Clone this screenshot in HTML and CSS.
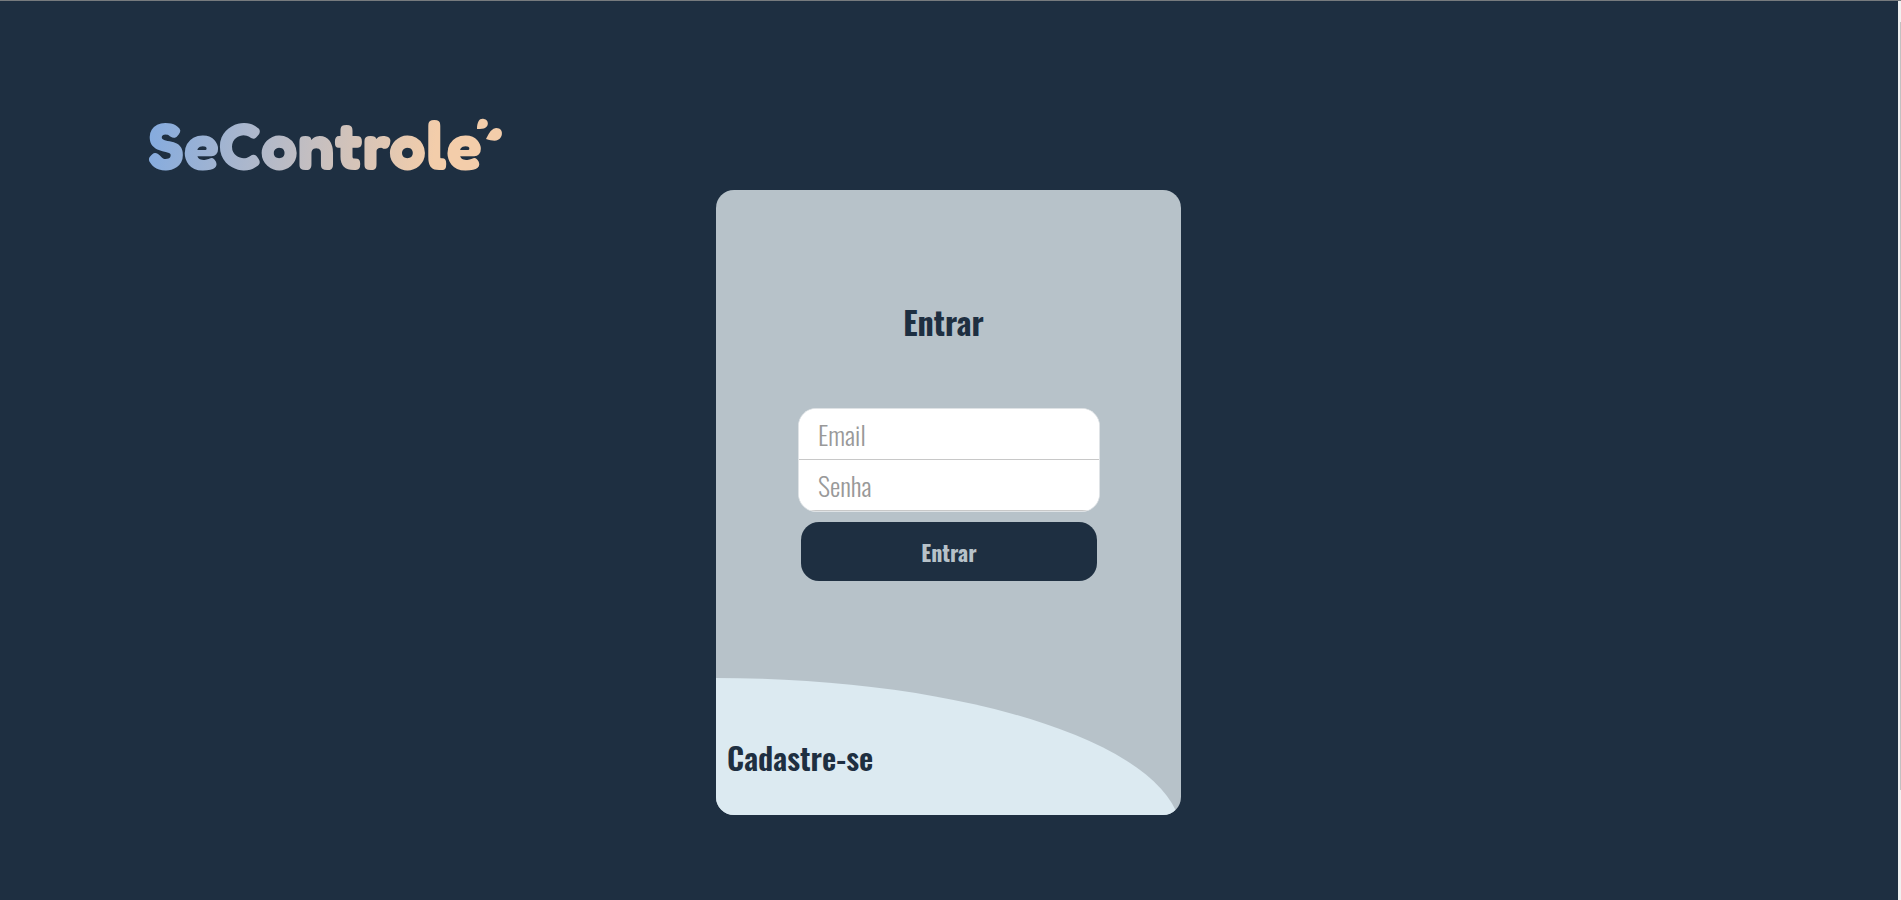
FILE: index.html
```html
<!DOCTYPE html>
<html lang="pt-BR">
<head>
<meta charset="utf-8">
<title>SeControle</title>
<link rel="stylesheet" href="styles.css">
</head>
<body>
<div class="page">
  <header class="header">
    <svg class="logo" width="364" height="90" viewBox="-4 -18 364 90" role="img" aria-label="SeControle">
      <defs>
        <linearGradient id="brand" gradientUnits="userSpaceOnUse" x1="0" y1="20" x2="285" y2="60">
          <stop offset="0" stop-color="#84abdf"/>
          <stop offset="1" stop-color="#f3cdaa"/>
        </linearGradient>
      </defs>
      <text class="logo-text" x="2" y="51" fill="url(#brand)">SeControle</text>
      <path fill="#f3cdaa" d="M331 11C331 3 334 0 338 1C343 2 343 8 339 10Q337 11 331 11Z"/>
      <path fill="#f3cdaa" d="M340 21Q345 10 350 10C356 10 357 15 355 19C352 24 347 23 340 21Z"/>
    </svg>
  </header>
  <main class="main">
    <section class="card">
      <form class="login">
        <h1 class="title">Entrar</h1>
        <div class="fields">
          <input class="field" type="email" placeholder="Email" aria-label="Email">
          <input class="field" type="password" placeholder="Senha" aria-label="Senha">
        </div>
        <button class="submit" type="button">Entrar</button>
      </form>
      <div class="signup">
        <a class="signup-link" href="#">Cadastre-se</a>
      </div>
    </section>
  </main>
</div>
<div class="rail"><div class="rail-thumb"></div></div>
</body>
</html>
```

FILE: styles.css
```css
* {
  box-sizing: border-box;
}

body {
  margin: 0;
  min-height: 100vh;
  display: flex;
  border-top: 1px solid #777b7e;
  background: #1e2f41;
  color: #1e2f41;
  font-family: Oswald, "Liberation Sans Narrow", "Liberation Sans", sans-serif;
}

.page {
  flex: 1;
}

.rail {
  display: flex;
  justify-content: flex-end;
  width: 3px;
  padding: 21px 0 110px;
  background: #f1f1f1;
}

.rail-thumb {
  width: 1px;
  background: #c1c1c1;
}

.header {
  padding: 99px 142px 0;
}

.logo {
  display: block;
  overflow: visible;
}

.logo-text {
  font-family: "Fredoka One", Fredoka, "Baloo 2", Nunito, Lato, sans-serif;
  font-size: 66px;
  font-weight: 700;
}

.main {
  padding: 0 17px 76px 16px;
}

.card {
  max-width: 465px;
  margin: 0 auto;
  border-radius: 18px;
  background: #b7c2c9;
  overflow: hidden;
}

.login {
  display: flex;
  flex-direction: column;
  align-items: center;
  padding: 110px 15px 97px 16px;
}

.title {
  margin: 0 11px 64px 0;
  font-size: 32px;
  line-height: 44px;
}

.fields {
  width: 100%;
  max-width: 302px;
  margin-bottom: 10px;
  border: 1px solid #dfe3e6;
  border-radius: 18px;
  background: #fff;
  overflow: hidden;
}

.field {
  display: block;
  width: 100%;
  height: 51px;
  padding: 0 19px;
  border: 0;
  border-bottom: 1px solid #c8c8c8;
  background: #fff;
  font: 300 26px Oswald, "Liberation Sans Narrow", "Liberation Sans", sans-serif;
}

.field::placeholder {
  color: #999;
}

.submit {
  width: 100%;
  max-width: 296px;
  height: 59px;
  border: 0;
  border-radius: 18px;
  background: #1e2f41;
  color: #b7c2c9;
  font: bold 22px Oswald, "Liberation Sans Narrow", "Liberation Sans", sans-serif;
}

.signup {
  height: 156px;
  margin-bottom: -19px;
  padding: 57px 11px 0;
  border-top-right-radius: 100% 100%;
  background: #dceaf1;
}

.signup-link {
  color: inherit;
  font-size: 31px;
  font-weight: 600;
  line-height: 44px;
  text-decoration: none;
}
```
